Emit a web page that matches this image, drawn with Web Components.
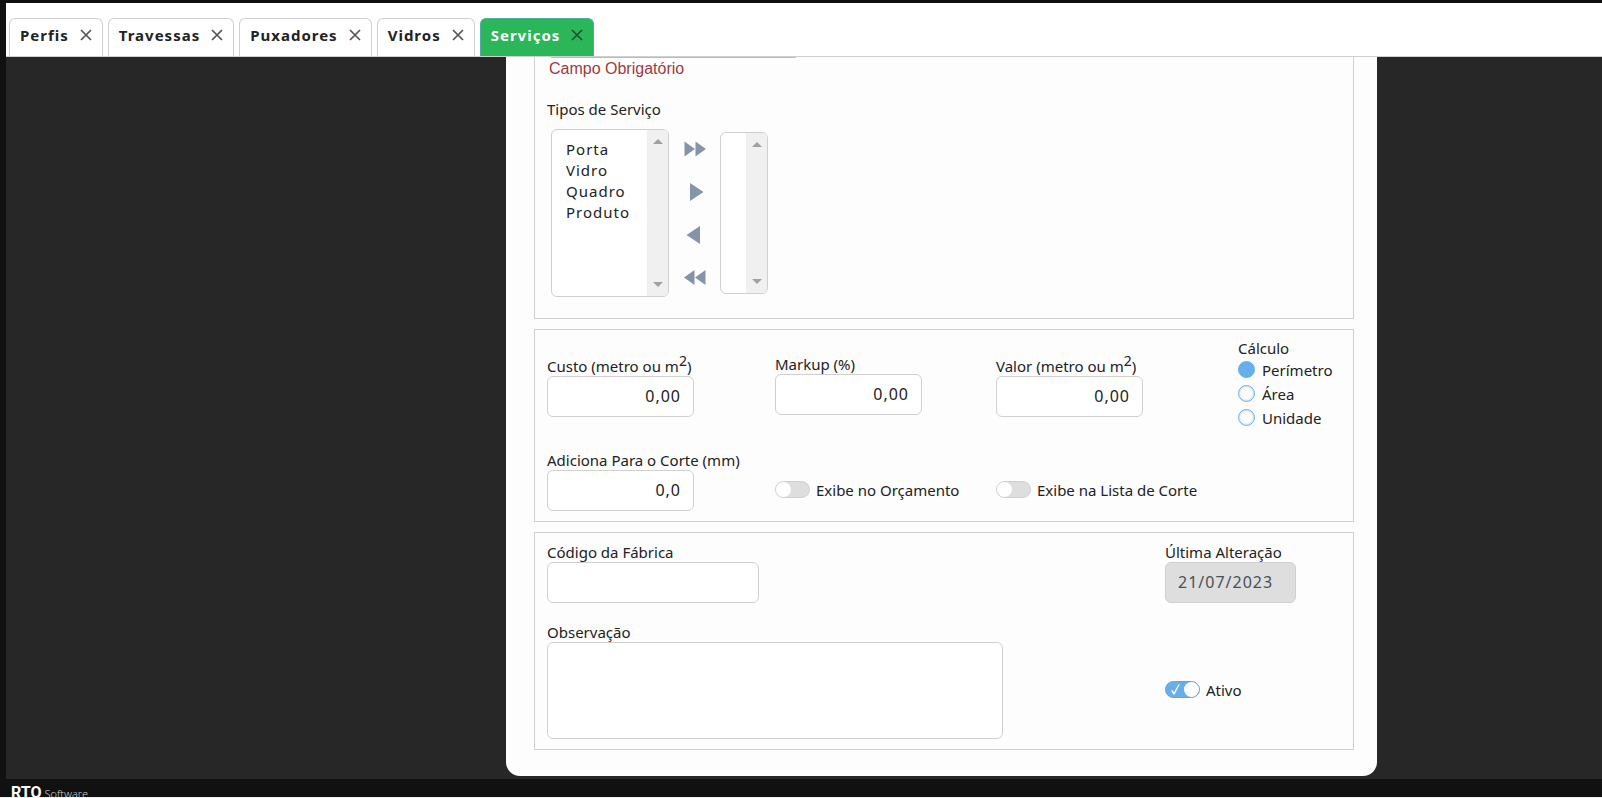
<!DOCTYPE html>
<html lang="pt-BR">
<head>
<meta charset="utf-8">
<title>Serviços</title>
<style>
  html { background: #fff; }
  body {
    margin: 0;
    font: 15px/19px "Trebuchet MS", "Noto Sans", sans-serif;
    color: #222;
    --line: #d0d0d0;
    --accent: #66afe9;
  }
</style>
</head>
<body>
<rto-shell>
  <rto-tabs slot="tabs">
    <rto-tab>Perfis</rto-tab>
    <rto-tab>Travessas</rto-tab>
    <rto-tab>Puxadores</rto-tab>
    <rto-tab>Vidros</rto-tab>
    <rto-tab active>Serviços</rto-tab>
  </rto-tabs>
  <service-form></service-form>
</rto-shell>

<script>
const define = (name, html, setup) => {
  const template = document.createElement('template');
  template.innerHTML = html;
  customElements.define(name, class extends HTMLElement {
    connectedCallback() {
      if (this.shadowRoot) return;
      this.attachShadow({ mode: 'open' }).append(template.content.cloneNode(true));
      if (setup) setup(this, this.shadowRoot);
    }
  });
};

define('rto-shell', `
  <style>
    :host { display: flex; flex-direction: column; height: 100vh; box-sizing: border-box;
      background: #111; border-top: 3px solid #0f0f0f; border-bottom: 1px solid #f4f4f4; overflow: hidden; }
    main { flex: 1; min-height: 0; margin-left: 6px; background: #272727; overflow: hidden; }
    slot[name=tabs] { display: block; margin-left: 6px; }
    footer { flex: none; height: 18px; padding-left: 11px; overflow: hidden; color: #fff;
      display: flex; align-items: baseline; gap: 3px; line-height: 28px; white-space: nowrap; }
    b { font-family: Roboto, sans-serif; font-size: 16px; }
    span { font-family: "Open Sans", sans-serif; font-weight: 300; font-size: 11px; color: #ddd; }
  </style>
  <slot name="tabs"></slot>
  <main><slot></slot></main>
  <footer><b>RTO</b><span>Software</span></footer>`);

define('rto-tabs', `
  <style>
    :host { display: block; background: #fff; border-bottom: 1px solid #ccd1cd; }
    nav { display: flex; gap: 5px; padding: 15px 3px 0; height: 38px; }
  </style>
  <nav><slot></slot></nav>`);

define('rto-tab', `
  <style>
    :host { display: flex; align-items: center; gap: 11px; padding: 0 10px 5px; box-sizing: border-box; height: 38px;
      border: 1px solid var(--line); border-bottom: 0; border-radius: 6px 6px 0 0; background: #fff;
      font-weight: 700; letter-spacing: 1px; }
    :host([active]) { background: #2bb659; border-color: #4aaea0; color: #fff; }
    a { color: inherit; text-decoration: none; line-height: 20px; }
    button { all: unset; display: flex; cursor: pointer; }
    svg { width: 12px; height: 12px; stroke: #555; stroke-width: 1.7; }
    :host([active]) svg { stroke: #1d5232; }
  </style>
  <a href="#"><slot></slot></a>
  <button aria-label="Fechar"><svg viewBox="0 0 12 12"><path d="M1 1 11 11M11 1 1 11"/></svg></button>`);

define('form-section', `
  <style>
    :host { display: block; border: 1px solid var(--line); padding: 9px 0 10px 12px; }
  </style>
  <slot></slot>`);

define('text-field', `
  <style>
    :host { display: block; }
    label { display: block; line-height: 19px; white-space: nowrap; }
    :host([tall-label]) label { padding-top: 4px; height: 19px; }
    input, textarea { display: block; box-sizing: border-box; width: var(--field-width, 147px); height: 41px; max-width: 100%;
      margin: 0; padding: 0 12px 2px; border: 1px solid var(--line); border-radius: 6px; background: #fff;
      font: inherit; font-size: 16px; letter-spacing: 1px; color: #222; outline: 0; }
    textarea { height: 97px; resize: none; }
    :host([numeric]) input { text-align: right; }
    input:disabled { background: #dedede; color: #495057; }
    :host([invalid]) input { border-color: #e3a9ab; }
    ::slotted(sup) { font-size: 14px; line-height: 0; }
  </style>`,
  (host, root) => {
    const control = document.createElement(host.hasAttribute('multiline') ? 'textarea' : 'input');
    control.id = 'control';
    control.value = host.getAttribute('value') || '';
    control.disabled = host.hasAttribute('disabled');
    if (host.hasAttribute('name')) {
      control.setAttribute('aria-label', host.getAttribute('name'));
    } else {
      const label = document.createElement('label');
      label.htmlFor = 'control';
      label.append(document.createElement('slot'));
      root.append(label);
    }
    root.append(control);
  });

define('toggle-field', `
  <style>
    :host { display: flex; align-items: center; gap: 6px; height: 41px; white-space: nowrap; }
    .track { position: relative; display: flex; margin-bottom: 2px; }
    input { appearance: none; box-sizing: border-box; width: 35px; height: 17px; margin: 0; border-radius: 9px;
      border: 1px solid #cfcfcf; background: #dedede; display: flex; }
    input::before { content: ""; width: 15px; height: 15px; border-radius: 50%; background: #fff; }
    input:checked { background: var(--accent); border-color: #6ba3d0; justify-content: flex-end; }
    svg { display: none; position: absolute; left: 5px; top: 3px; width: 11px; height: 11px; pointer-events: none; }
    input:checked + svg { display: block; }
  </style>
  <span class="track"><input type="checkbox" id="control"><svg viewBox="0 0 11 11"><path d="M1 6.6 2.2 6 4 8.3 8.6.3 9.8.3 4.6 10.500H3.400Z" fill="#fff"/></svg></span>
  <label for="control"><slot></slot></label>`,
  (host, root) => { root.querySelector('input').checked = host.hasAttribute('checked'); });

define('radio-list', `
  <style>
    :host { display: block; white-space: nowrap; }
    fieldset { border: 0; margin: 0; padding: 0 0 1px; min-width: 0; }
    legend { padding: 0; line-height: 19px; }
    div { display: flex; align-items: center; gap: 7px; height: 24px; }
    input { appearance: none; box-sizing: border-box; width: 17px; height: 17px; margin: 0 0 2px; border-radius: 50%;
      border: 1px solid var(--accent); background: #fff; box-shadow: inset 0 0 3px #bbb; }
    input:checked { background: var(--accent); box-shadow: none; }
  </style>
  <fieldset>
    <legend>Cálculo</legend>
    <div><input type="radio" name="calculo" id="perimetro" checked><label for="perimetro">Perímetro</label></div>
    <div><input type="radio" name="calculo" id="area"><label for="area">Área</label></div>
    <div><input type="radio" name="calculo" id="unidade"><label for="unidade">Unidade</label></div>
  </fieldset>`);

define('pick-list', `
  <style>
    :host { display: block; }
    .row { display: flex; align-items: center; padding: 10px 0 0 4px; }
    .box { display: flex; box-sizing: border-box; width: 118px; height: 168px; overflow: hidden;
      border: 1px solid var(--line); border-radius: 6px; background: #fff; }
    .box.empty { width: 48px; height: 162px; }
    select { appearance: none; flex: 1; min-width: 0; box-sizing: border-box; height: 100%; margin: 0; padding: 9px 0 0 14px;
      border: 0; outline: 0; background: none; overflow: hidden; font: inherit; letter-spacing: 1px; color: #222; }
    .empty select { padding: 0; }
    option { padding: 0; min-height: 21px; line-height: 21px; }
    .rail { flex: none; width: 21px; background: #f0f0f0; display: flex; flex-direction: column;
      justify-content: space-between; align-items: center; padding: 9px 0; box-sizing: border-box; }
    .rail svg { width: 10px; height: 5px; fill: #a0a0a0; }
    .moves { display: flex; flex-direction: column; align-items: center; gap: 21px; width: 51px; }
    button { all: unset; display: flex; height: 22px; align-items: center; cursor: pointer; }
    button svg { width: 22px; height: 18px; fill: #8594a8; }
  </style>
  <label for="available">Tipos de Serviço</label>
  <div class="row">
    <div class="box">
      <select id="available" multiple size="7"><option>Porta</option><option>Vidro</option><option>Quadro</option><option>Produto</option></select>
      <div class="rail"><svg viewBox="0 0 10 5"><path d="M0 5 5 0 10 5Z"/></svg><svg viewBox="0 0 10 5"><path d="M0 0 5 5 10 0Z"/></svg></div>
    </div>
    <div class="moves">
      <button aria-label="Adicionar todos"><svg viewBox="0 0 22 18"><path d="M.5 1.5 11 9 .5 16.5ZM11.500 1.500 22 9 11.500 16.500Z"/></svg></button>
      <button aria-label="Adicionar"><svg viewBox="0 0 22 18"><path d="M6 0 19.500 9 6 18Z"/></svg></button>
      <button aria-label="Remover"><svg viewBox="0 0 22 18"><path d="M16 0 2.500 9 16 18Z"/></svg></button>
      <button aria-label="Remover todos"><svg viewBox="0 0 22 18"><path d="M10.500 1 0 8.500 10.500 16ZM21.500 1 11 8.500 21.500 16Z"/></svg></button>
    </div>
    <div class="box empty">
      <select aria-label="Tipos selecionados" multiple size="7"></select>
      <div class="rail"><svg viewBox="0 0 10 5"><path d="M0 5 5 0 10 5Z"/></svg><svg viewBox="0 0 10 5"><path d="M0 0 5 5 10 0Z"/></svg></div>
    </div>
  </div>`);

define('service-form', `
  <style>
    :host { display: grid; grid-template-columns: minmax(0, 20fr) minmax(0, 871px) minmax(0, 9fr); }
    form { grid-column: 2; box-sizing: border-box; margin-top: -50px; padding: 0 23px 26px 28px;
      display: flex; flex-direction: column; gap: 10px; background: #fdfdfd; border-radius: 0 0 14px 14px; }
    .name { --field-width: 253px; }
    .error { margin: 0; padding: 1px 0 0 2px; font: 16px/20px "Liberation Sans", sans-serif; color: #a03a40; }
    pick-list { margin: 21px 0 11px; }
    .prices { display: grid; grid-template-columns: 228fr 221fr 242fr 115fr; row-gap: 20px; align-items: center; }
    .notes { display: grid; grid-template-columns: 618fr 188fr; row-gap: 20px; padding-top: 1px; }
    .prices > *, .notes > * { min-width: 0; }
    .prices toggle-field { align-self: end; }
    .code { --field-width: 212px; }
    .date { --field-width: 131px; }
    .remarks { --field-width: 456px; }
    .notes toggle-field { align-self: end; height: 97px; }
  </style>
  <form>
    <form-section>
      <text-field class="name" name="Descrição" invalid></text-field>
      <p class="error">Campo Obrigatório</p>
      <pick-list></pick-list>
    </form-section>
    <form-section>
      <div class="prices">
        <text-field numeric tall-label value="0,00">Custo (metro ou m<sup>2</sup>)</text-field>
        <text-field numeric value="0,00">Markup (%)</text-field>
        <text-field numeric tall-label value="0,00">Valor (metro ou m<sup>2</sup>)</text-field>
        <radio-list></radio-list>
        <text-field numeric value="0,0">Adiciona Para o Corte (mm)</text-field>
        <toggle-field>Exibe no Orçamento</toggle-field>
        <toggle-field>Exibe na Lista de Corte</toggle-field>
      </div>
    </form-section>
    <form-section>
      <div class="notes">
        <text-field class="code">Código da Fábrica</text-field>
        <text-field class="date" disabled value="21/07/2023">Última Alteração</text-field>
        <text-field class="remarks" multiline>Observação</text-field>
        <toggle-field checked>Ativo</toggle-field>
      </div>
    </form-section>
  </form>`);
</script>
</body>
</html>
